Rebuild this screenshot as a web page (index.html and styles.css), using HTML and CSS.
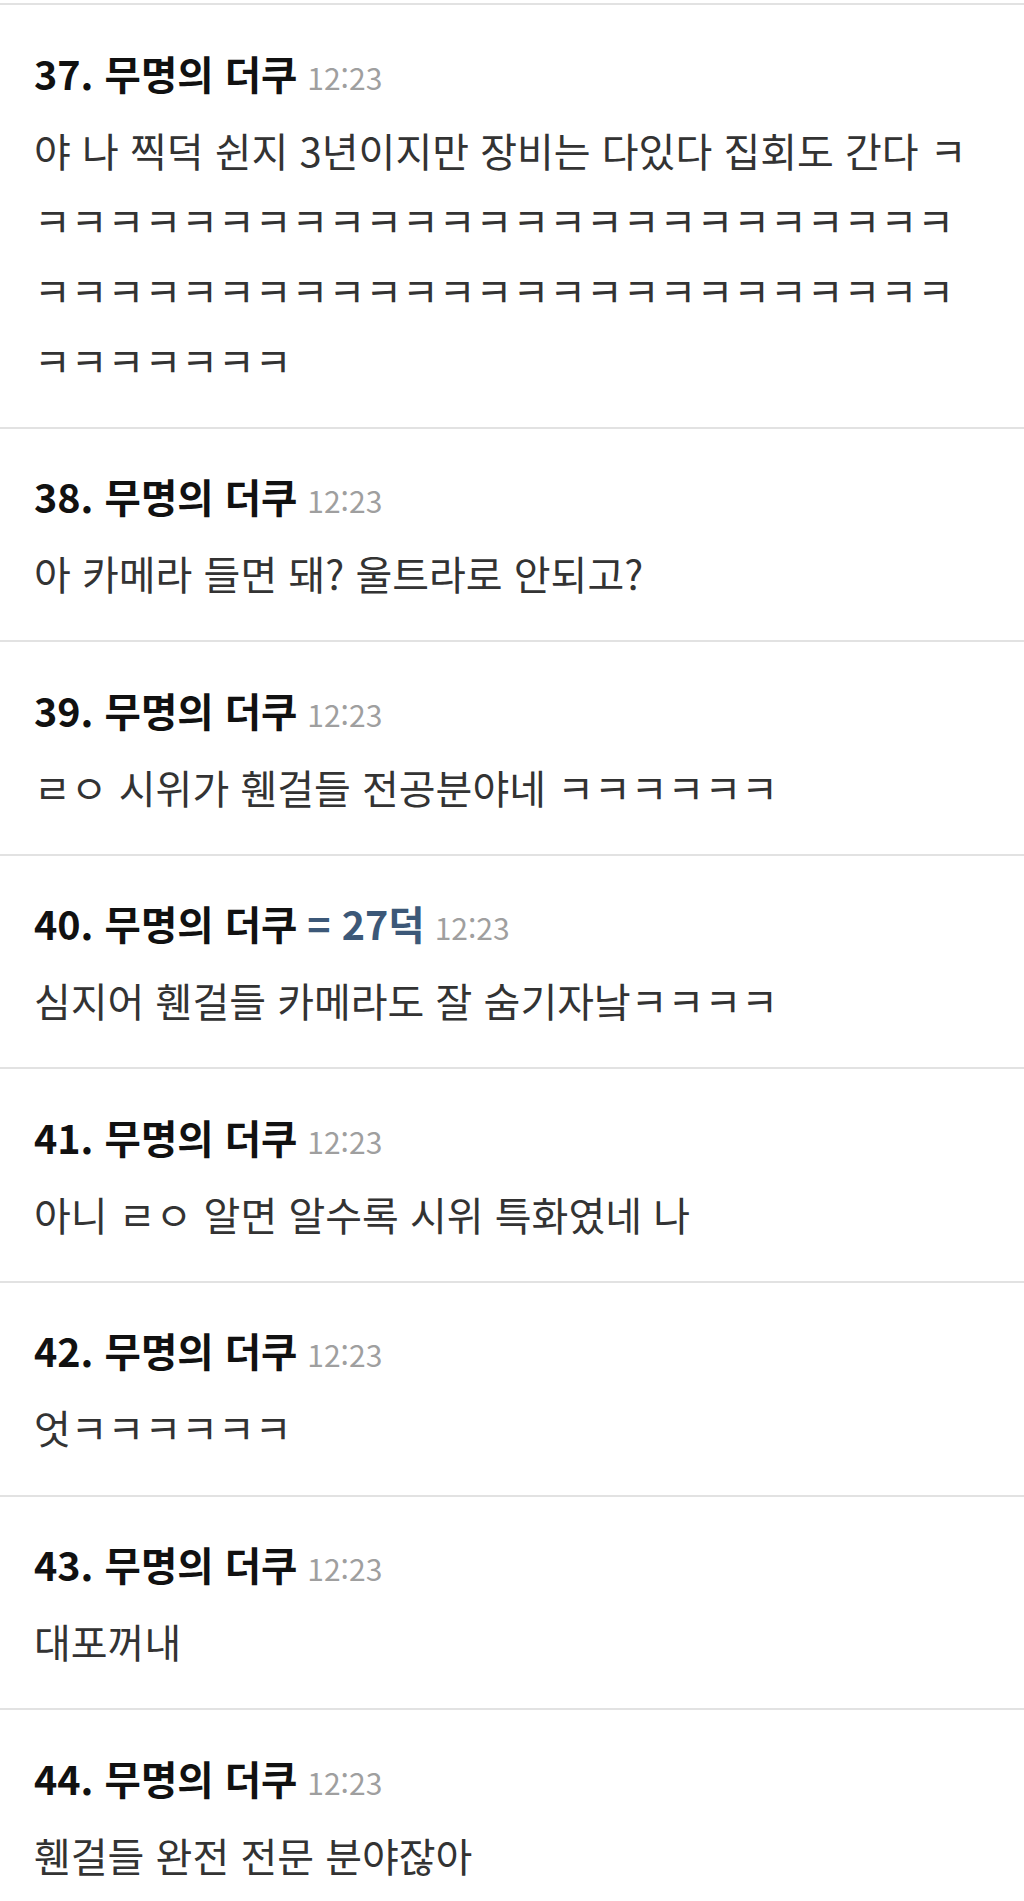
FILE: index.html
```html
<!DOCTYPE html>
<html lang="ko">
<head>
  <meta charset="UTF-8" />
  <meta name="viewport" content="width=device-width, initial-scale=1" />
  <title>무명의 더쿠 댓글</title>
  <link rel="stylesheet" href="styles.css">
</head>
<body>
  <div class="comments">
    <div class="comment">
      <div class="comment-head">
        <span class="writer">37. 무명의 더쿠</span>
        <span class="time">12:23</span>
      </div>
      <div class="comment-body">야 나 찍덕 쉰지 3년이지만 장비는 다있다 집회도 간다 ㅋㅋㅋㅋㅋㅋㅋㅋㅋㅋㅋㅋㅋㅋㅋㅋㅋㅋㅋㅋㅋㅋㅋㅋㅋㅋㅋㅋㅋㅋㅋㅋㅋㅋㅋㅋㅋㅋㅋㅋㅋㅋㅋㅋㅋㅋㅋㅋㅋㅋㅋㅋㅋㅋㅋㅋㅋㅋ</div>
    </div>

    <div class="comment">
      <div class="comment-head">
        <span class="writer">38. 무명의 더쿠</span>
        <span class="time">12:23</span>
      </div>
      <div class="comment-body">아 카메라 들면 돼? 울트라로 안되고?</div>
    </div>

    <div class="comment">
      <div class="comment-head">
        <span class="writer">39. 무명의 더쿠</span>
        <span class="time">12:23</span>
      </div>
      <div class="comment-body">ㄹㅇ 시위가 휀걸들 전공분야네 ㅋㅋㅋㅋㅋㅋ</div>
    </div>

    <div class="comment">
      <div class="comment-head">
        <span class="writer">40. 무명의 더쿠</span>
        <span class="reply-to">= 27덕</span>
        <span class="time">12:23</span>
      </div>
      <div class="comment-body">심지어 휀걸들 카메라도 잘 숨기자낰ㅋㅋㅋㅋ</div>
    </div>

    <div class="comment">
      <div class="comment-head">
        <span class="writer">41. 무명의 더쿠</span>
        <span class="time">12:23</span>
      </div>
      <div class="comment-body">아니 ㄹㅇ 알면 알수록 시위 특화였네 나</div>
    </div>

    <div class="comment">
      <div class="comment-head">
        <span class="writer">42. 무명의 더쿠</span>
        <span class="time">12:23</span>
      </div>
      <div class="comment-body">엇ㅋㅋㅋㅋㅋㅋ</div>
    </div>

    <div class="comment">
      <div class="comment-head">
        <span class="writer">43. 무명의 더쿠</span>
        <span class="time">12:23</span>
      </div>
      <div class="comment-body">대포꺼내</div>
    </div>

    <div class="comment">
      <div class="comment-head">
        <span class="writer">44. 무명의 더쿠</span>
        <span class="time">12:23</span>
      </div>
      <div class="comment-body">휀걸들 완전 전문 분야잖아</div>
    </div>
  </div>
</body>
</html>
```

FILE: styles.css
```css
body {
  background-color: #fff;
  color: #333;
  font-family: "Noto Sans CJK KR", "Noto Sans", sans-serif;
  margin: 0;
  padding: 0;
}
.comments {
  padding-top: 3px;
}
.comment {
  border-top: 2px solid #e2e2e2;
  padding: 44.5px 50px 32.1px 34px;
}
.comment-head {
  display: flex;
  align-items: baseline;
  gap: 10px;
  height: 45px;
  line-height: 45px;
  margin-bottom: 20px;
}
.writer {
  color: #111;
  font-size: 39.5px;
  font-weight: bold;
}
.reply-to {
  color: #3c5878;
  font-size: 39.5px;
  font-weight: bold;
}
.time {
  color: #9f9f9f;
  font-size: 30px;
}
.comment-body {
  color: #333;
  font-size: 40px;
  line-height: 70px;
}
```
